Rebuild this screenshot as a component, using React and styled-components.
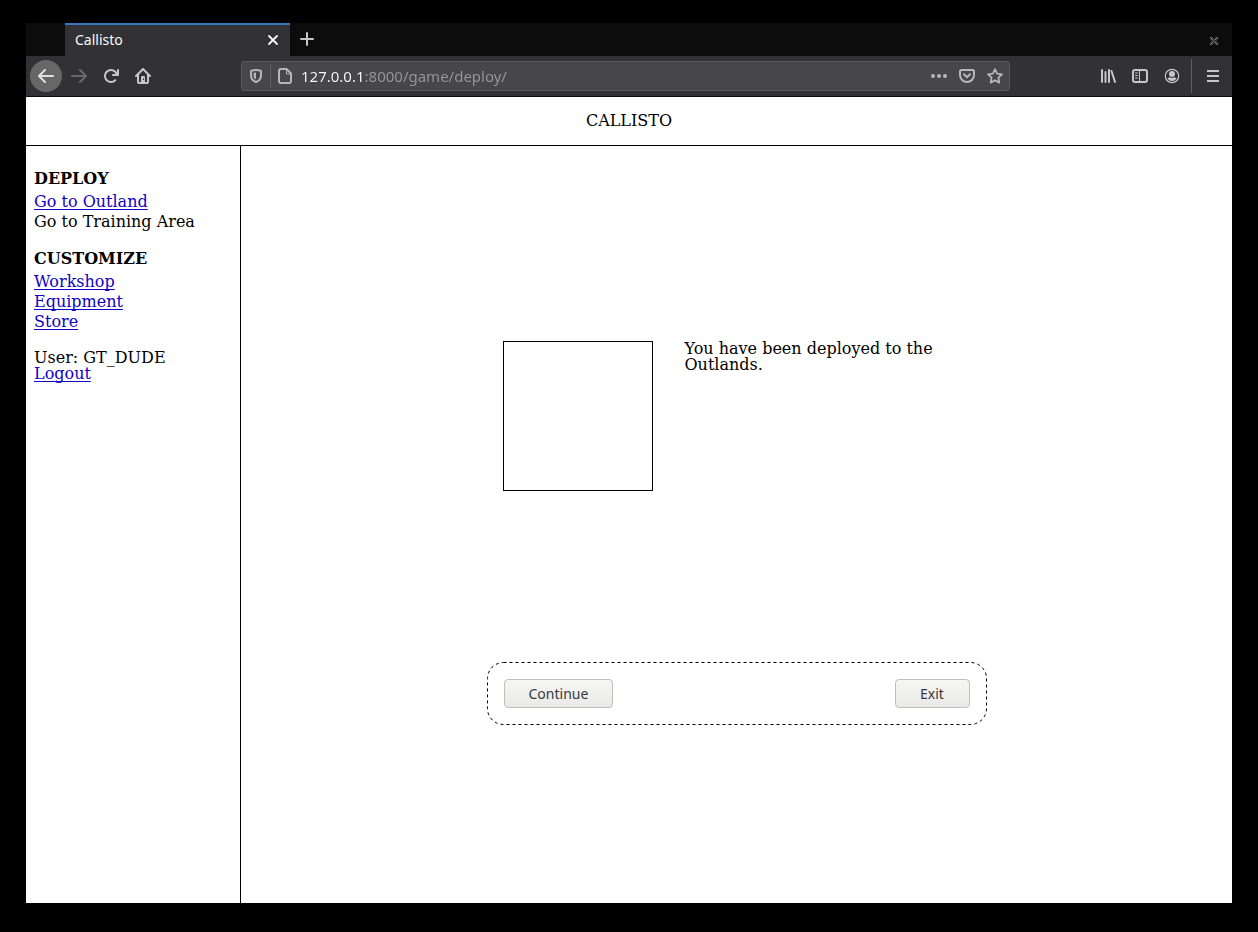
import React from 'react';
import styled, { createGlobalStyle } from 'styled-components';

const GlobalStyle = createGlobalStyle`
  *, *::before, *::after { box-sizing: border-box; }
  body { margin: 0; background: #000; }
`;

const uiFont = '"Noto Sans", "Open Sans", sans-serif';

const Desktop = styled.div`
  min-height: 100vh;
  padding: 23px 26px 29px;
  display: flex;
  background: #000;
`;

const BrowserWindow = styled.div`
  flex: 1;
  min-width: 0;
  display: flex;
  flex-direction: column;
  background: #fff;
`;

const TabStrip = styled.div`
  display: flex;
  align-items: stretch;
  height: 33px;
  padding: 0 6px 0 39px;
  background: #0c0c0d;
  font-family: ${uiFont};
`;

const Tab = styled.div`
  width: 225px;
  display: flex;
  align-items: center;
  justify-content: space-between;
  margin-right: 1px;
  padding: 0 8px 2px 10px;
  border-top: 2px solid #3478c6;
  background: #323234;
  color: #f9f9fa;
  font-size: 14px;
  line-height: 20px;
`;

const IconButton = styled.button`
  flex: none;
  display: flex;
  align-items: center;
  justify-content: center;
  width: ${(p) => p.$size || 32}px;
  height: ${(p) => p.$size || 32}px;
  padding: 0;
  border: 0;
  border-radius: ${(p) => (p.$round ? '50%' : '2px')};
  background: ${(p) => (p.$round ? '#676768' : 'transparent')};
  color: ${(p) => p.$color || '#c6c6c7'};
`;

const BackButton = styled(IconButton)`
  margin-right: 1px;
`;

const WindowCloseButton = styled(IconButton)`
  align-self: flex-end;
  margin-bottom: 3px;
`;

const TabSpacer = styled.div`
  flex: 1;
`;

const Toolbar = styled.div`
  display: flex;
  align-items: center;
  height: 41px;
  padding: 0 3px 0 4px;
  border-bottom: 1px solid #0c0c0d;
  background: #323234;
`;

const NavButtons = styled.div`
  flex: 1 1 211px;
  display: flex;
`;

const AddressBar = styled.div`
  flex: 0 1 769px;
  min-width: 0;
  display: flex;
  align-items: center;
  height: 30px;
  padding: 0 0 0 1px;
  border: 1px solid #5a5a5c;
  border-radius: 3px;
  background: #474749;
`;

const AddressDivider = styled.span`
  width: 1px;
  height: 22px;
  margin: 0 1px;
  background: #606062;
`;

const AddressInput = styled.input`
  flex: 1;
  min-width: 0;
  height: 24px;
  margin-left: 3px;
  padding: 0;
  border: 0;
  outline: 0;
  background: linear-gradient(to right, #f9f9fa 62px, #97979a 62px);
  background-clip: text;
  -webkit-background-clip: text;
  color: #f9f9fa;
  -webkit-text-fill-color: transparent;
  font-family: ${uiFont};
  font-size: 15px;
  line-height: 24px;
`;

const ToolButtons = styled.div`
  flex: 1 1 219px;
  display: flex;
  align-items: center;
  justify-content: flex-end;
`;

const MenuDivider = styled.span`
  width: 1px;
  height: 34px;
  margin: 0 5px 0 3px;
  background: #606062;
`;

const Page = styled.div`
  flex: 1;
  display: flex;
  flex-direction: column;
  color: #000;
  font-family: "DejaVu Serif", serif;
  font-size: 16px;
  line-height: 16px;
`;

const PageHeader = styled.header`
  padding: 16px;
  border-bottom: 1px solid #000;
  text-align: center;
`;

const PageBody = styled.div`
  flex: 1;
  display: flex;
`;

const Sidebar = styled.nav`
  flex: none;
  width: 215px;
  padding: 24px 8px;
  border-right: 1px solid #000;
`;

const SideHeading = styled.h2`
  margin: 0 0 4px;
  font-size: 16px;
  line-height: 18px;
  font-weight: bold;
`;

const SideList = styled.ul`
  margin: 0 0 18px;
  padding: 0;
  list-style: none;
  line-height: 20px;
`;

const PageLink = styled.a`
  color: #1200c4;
  text-decoration: underline 1px;
  text-decoration-skip-ink: none;
  text-underline-offset: 2px;
`;

const Main = styled.main`
  flex: 1;
  display: flex;
  align-items: center;
  justify-content: center;
`;

const Encounter = styled.section`
  width: 500px;
  min-height: 400px;
  display: flex;
  flex-direction: column;
  justify-content: space-between;
`;

const Scene = styled.div`
  display: flex;
  gap: 32px;
  padding: 16px;
`;

const Portrait = styled.div`
  flex: none;
  width: 150px;
  height: 150px;
  border: 1px solid #000;
`;

const Message = styled.p`
  flex: 1;
  margin: 0;
`;

const Actions = styled.div`
  position: relative;
  display: flex;
  justify-content: space-between;
  padding: 17px;
`;

const DashedOutline = styled.svg`
  position: absolute;
  inset: 0;
  width: 100%;
  height: 100%;
  pointer-events: none;

  rect {
    width: calc(100% - 1px);
    height: calc(100% - 1px);
    fill: none;
    stroke: #000;
    stroke-dasharray: 3 3;
  }
`;

const ActionButton = styled.button`
  min-width: 75px;
  height: 29px;
  padding: 2px 24px 0;
  border: 1px solid #bfbfbd;
  border-radius: 4px;
  background: linear-gradient(#f6f6f5, #e9e9e7);
  color: #36393b;
  font-family: ${uiFont};
  font-size: 14px;
  line-height: 20px;
`;

const Icon = ({ size = 16, children }) => (
  <svg width={size} height={size} viewBox="0 0 16 16" fill="currentColor" aria-hidden="true">
    {children}
  </svg>
);

const Stroke = ({ width = 2, cap = 'round', ...rest }) => (
  <path fill="none" stroke="currentColor" strokeWidth={width} strokeLinecap={cap} strokeLinejoin="round" {...rest} />
);

const arrow =
  'M15 7H3.414l4.293-4.293a1 1 0 0 0-1.414-1.414l-6 6a1 1 0 0 0 0 1.414l6 6a1 1 0 0 0 1.414-1.414L3.414 9H15a1 1 0 0 0 0-2z';

export default function App() {
  return (
    <Desktop>
      <GlobalStyle />
      <BrowserWindow>
        <TabStrip>
          <Tab>
            <span>Callisto</span>
            <IconButton $size={18} $color="#f9f9fa" aria-label="Close tab">
              <Icon><Stroke width={1.8} d="M4 4l8 8M12 4l-8 8" /></Icon>
            </IconButton>
          </Tab>
          <IconButton aria-label="New tab">
            <Icon><Stroke d="M2 8h12M8 2v12" /></Icon>
          </IconButton>
          <TabSpacer />
          <WindowCloseButton $size={24} $color="#8c8c8c" aria-label="Close window">
            <Icon>
              <Stroke width={1} cap="butt" d="M4 4l3.500 3.500M12 4L8.500 7.500M4 12l3.500-3.500M12 12L8.500 8.500" />
              <Stroke width={1} cap="butt" d="M5.500 4l2.500 2.500L10.500 4M5.500 12L8 9.500l2.500 2.500M4 5.500L6.500 8 4 10.500M12 5.500L9.500 8l2.500 2.500" opacity="0.6" />
            </Icon>
          </WindowCloseButton>
        </TabStrip>
        <Toolbar>
          <NavButtons>
            <BackButton $round $color="#e0e0e0" aria-label="Back"><Icon><path d={arrow} /></Icon></BackButton>
            <IconButton $color="#69696b" aria-label="Forward">
              <Icon><path d={arrow} transform="matrix(-1 0 0 1 16 0)" /></Icon>
            </IconButton>
            <IconButton aria-label="Reload">
              <Icon>
                <path d="M15 1a1 1 0 0 0-1 1v2.418A6.995 6.995 0 1 0 8 15a6.954 6.954 0 0 0 4.95-2.05 1 1 0 0 0-1.414-1.414A5.019 5.019 0 1 1 12.549 6H10a1 1 0 0 0 0 2h5a1 1 0 0 0 1-1V2a1 1 0 0 0-1-1z" />
              </Icon>
            </IconButton>
            <IconButton aria-label="Home">
              <Icon>
                <path d="M15.707 7.293l-7-7a1 1 0 0 0-1.414 0l-7 7a1 1 0 0 0 1.414 1.414L2 8.414V14a2 2 0 0 0 2 2h8a2 2 0 0 0 2-2V8.414l.293.293a1 1 0 0 0 1.414-1.414zM12 14H4V6.414l4-4 4 4z" />
                <path fillRule="evenodd" d="M7 8h2a1 1 0 0 1 1 1v5H6V9a1 1 0 0 1 1-1zM8 10.500v1.500h1v-1.500z" />
              </Icon>
            </IconButton>
          </NavButtons>
          <AddressBar>
            <IconButton $size={26} $color="#b7b7b8" aria-label="Tracking protection">
              <Icon>
                <Stroke d="M8 2c1.800 0 3.500.4 5 1v4.200c0 3.500-2 5.800-5 6.800-3-1-5-3.300-5-6.800V3c1.500-.6 3.200-1 5-1z" />
                <path d="M8 4.500v7C6.200 10.500 5.500 9.200 5.500 7V5c.8-.3 1.600-.5 2.500-.5z" />
              </Icon>
            </IconButton>
            <AddressDivider />
            <IconButton $size={26} $color="#b7b7b8" aria-label="Site information">
              <Icon>
                <Stroke d="M4 1h5.500L14 5.500V13a2 2 0 0 1-2 2H4a2 2 0 0 1-2-2V3a2 2 0 0 1 2-2z" />
                <Stroke width={1} d="M9.500 1.500V6H14" />
              </Icon>
            </IconButton>
            <AddressInput aria-label="Address" defaultValue="127.0.0.1:8000/game/deploy/" />
            <IconButton $size={28} $color="#b7b7b8" aria-label="Page actions">
              <Icon><circle cx="2" cy="8" r="2" /><circle cx="8" cy="8" r="2" /><circle cx="14" cy="8" r="2" /></Icon>
            </IconButton>
            <IconButton $size={28} $color="#b7b7b8" aria-label="Save to Pocket">
              <Icon>
                <Stroke d="M2.500 2h11A1.500 1.500 0 0 1 15 3.500V7a7 7 0 0 1-14 0V3.500A1.500 1.500 0 0 1 2.500 2z" />
                <Stroke d="M5 6.200l3 3 3-3" />
              </Icon>
            </IconButton>
            <IconButton $size={28} $color="#b7b7b8" aria-label="Bookmark this page">
              <Icon><Stroke d="M8 1.200l2.100 4.400 4.800.7-3.500 3.400.9 4.900L8 12.200l-4.300 2.400.9-4.900L1.100 6.300l4.800-.7z" width={1.800} /></Icon>
            </IconButton>
          </AddressBar>
          <ToolButtons>
            <IconButton aria-label="Library">
              <Icon><Stroke d="M2 2v12M5.500 4v10M9 2v12M11.500 3l3.500 11" width={2} /></Icon>
            </IconButton>
            <IconButton aria-label="Sidebars">
              <Icon>
                <Stroke d="M3 2h10a2 2 0 0 1 2 2v8a2 2 0 0 1-2 2H3a2 2 0 0 1-2-2V4a2 2 0 0 1 2-2z" />
                <Stroke d="M7.500 2v12M3.500 5h2M3.500 7.500h2M3.500 10h2" width={1} />
              </Icon>
            </IconButton>
            <IconButton aria-label="Account">
              <Icon>
                <circle cx="8" cy="8" r="6.700" fill="none" stroke="currentColor" strokeWidth="1.200" />
                <circle cx="8" cy="6" r="3" />
                <path d="M3.500 10c1 0 1.800-.2 2.500-.7 1.200.9 2.800.9 4 0 .7.500 1.500.7 2.500.7-.6 1.800-2.300 3-4.500 3s-3.900-1.200-4.500-3z" />
              </Icon>
            </IconButton>
            <MenuDivider />
            <IconButton aria-label="Open menu">
              <Icon><Stroke cap="butt" d="M2 3h12M2 8h12M2 13h12" /></Icon>
            </IconButton>
          </ToolButtons>
        </Toolbar>
        <Page>
          <PageHeader>CALLISTO</PageHeader>
          <PageBody>
            <Sidebar>
              <SideHeading>DEPLOY</SideHeading>
              <SideList>
                <li><PageLink href="#outland">Go to Outland</PageLink></li>
                <li>Go to Training Area</li>
              </SideList>
              <SideHeading>CUSTOMIZE</SideHeading>
              <SideList>
                <li><PageLink href="#workshop">Workshop</PageLink></li>
                <li><PageLink href="#equipment">Equipment</PageLink></li>
                <li><PageLink href="#store">Store</PageLink></li>
              </SideList>
              <div>User: GT_DUDE</div>
              <PageLink href="#logout">Logout</PageLink>
            </Sidebar>
            <Main>
              <Encounter>
                <Scene>
                  <Portrait />
                  <Message>You have been deployed to the Outlands.</Message>
                </Scene>
                <Actions>
                  <DashedOutline aria-hidden="true"><rect x="0.5" y="0.5" rx="16" /></DashedOutline>
                  <ActionButton>Continue</ActionButton>
                  <ActionButton>Exit</ActionButton>
                </Actions>
              </Encounter>
            </Main>
          </PageBody>
        </Page>
      </BrowserWindow>
    </Desktop>
  );
}
